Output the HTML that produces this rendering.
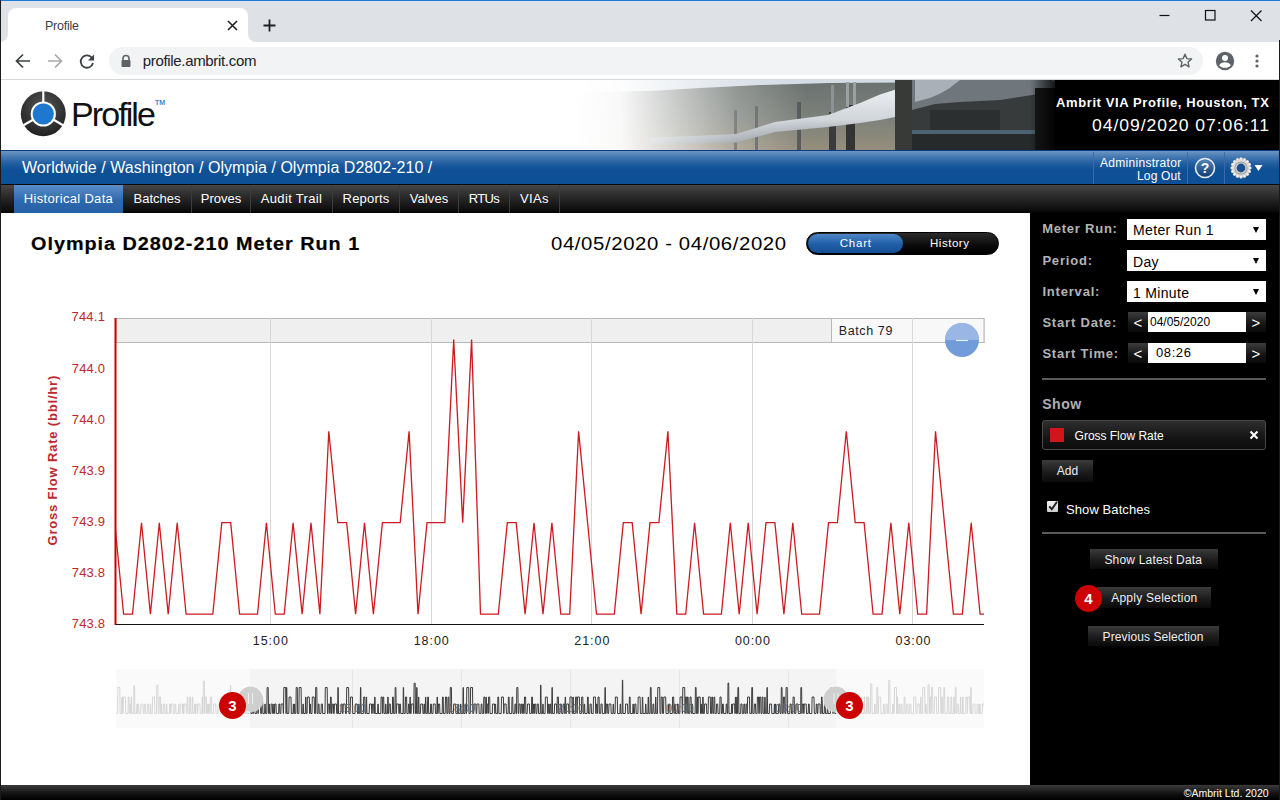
<!DOCTYPE html>
<html><head><meta charset="utf-8">
<style>
*{margin:0;padding:0;box-sizing:border-box}
html,body{width:1280px;height:800px;overflow:hidden;background:#000;font-family:"Liberation Sans",sans-serif}
.abs{position:absolute;white-space:nowrap}
#chrome{position:absolute;left:0;top:0;width:1280px;height:80px;background:#dee1e6}
#topline{left:0;top:0;width:1280px;height:1px;background:#1e78d8}
#leftline{left:0;top:0;width:1px;height:800px;background:#1a1a1a;z-index:50}
#tab{left:8px;top:8px;width:240px;height:34px;background:#fff;border-radius:8px 8px 0 0}
#toolbar{left:0;top:42px;width:1280px;height:37px;background:#fff}
#tbline{left:0;top:79px;width:1280px;height:1px;background:#d6d8db}
#omni{left:109px;top:47px;width:1094px;height:28px;background:#f1f3f4;border-radius:14px}
.ct{color:#3c4043;font-size:12.5px}
/* header */
#hdr{left:0;top:80px;width:1280px;height:70px;background:#fff;overflow:hidden}
#crumb{left:0;top:150px;width:1280px;height:35px;background:linear-gradient(#0a3a86 0,#0a3a86 1px,#6a94c0 1.5px,#4a7cb5 6px,#1f5c9f 14px,#0e5096 20px,#0e5096 34px,#0a0a0a 34px)}
#nav{left:0;top:185px;width:1280px;height:28px;background:linear-gradient(#474747,#2a2a2a 40%,#0c0c0c 92%,#000)}
.tabi{position:absolute;top:0;height:28px;color:#fff;font-size:13px;line-height:28px;text-align:center;border-right:1px solid #3c3c3c;white-space:nowrap}
#content{left:0;top:213px;width:1030px;height:572px;background:#fff}
#side{left:1030px;top:213px;width:250px;height:572px;background:#000}
#foot{left:0;top:785px;width:1280px;height:15px;background:linear-gradient(#3a3a3a,#111 60%,#000)}
.lbl{position:absolute;color:#b4b4b4;font-weight:bold;font-size:13px;line-height:1;white-space:nowrap;letter-spacing:0.81px}
.sel{position:absolute;left:1127px;width:139px;height:21px;background:#fff;color:#000;font-size:14px;line-height:21px;padding-left:6px}
.sel:after{content:"";position:absolute;right:7px;top:8px;border-left:3.5px solid transparent;border-right:3.5px solid transparent;border-top:6px solid #000}
.btn{position:absolute;height:22px;background:linear-gradient(#3b3b3b,#1c1c1c 55%,#0a0a0a);color:#eee;font-size:12px;line-height:22px;text-align:center}
.ylab{position:absolute;color:#c0282d;font-size:13px;text-align:right;width:40px;left:65px}
.xlab{position:absolute;color:#222;font-size:12.5px;line-height:1;top:635px;width:50px;text-align:center}
.badge{position:absolute;width:27px;height:27px;border-radius:50%;background:#cc0000;color:#fff;font-weight:bold;font-size:15px;line-height:27px;text-align:center}
#title{letter-spacing:0.9px!important;left:31.2px!important;top:234.6px!important;right:auto!important}
#range{letter-spacing:0.55px!important;left:550.6px!important;top:234.6px!important;right:auto!important}
#site{letter-spacing:0.61px!important;left:1056.0px!important;top:15.8px!important;right:auto!important}
#clock{letter-spacing:0.85px!important;left:1092.0px!important;top:38.2px!important;right:auto!important}
#crumbt{letter-spacing:0.04px!important;left:22.0px!important;top:9.8px!important;right:auto!important}
#l1{letter-spacing:0.76px!important;left:1042.2px!important;top:222.4px!important;right:auto!important}
#s1t{letter-spacing:0.36px!important;left:6.0px!important;top:3.8px!important;right:auto!important}
#show{letter-spacing:0.57px!important;left:1042.2px!important;top:396.6px!important;right:auto!important}
#gfr{letter-spacing:-0.02px!important;left:1074.6px!important;top:429.6px!important;right:auto!important}
#sb{letter-spacing:0.09px!important;left:1066.0px!important;top:503.0px!important;right:auto!important}
#b1t{letter-spacing:0.19px!important;left:1104.4px!important;top:553.8px!important;right:auto!important}
#b2t{letter-spacing:0.24px!important;left:1111.2px!important;top:591.8px!important;right:auto!important}
#b3t{letter-spacing:0.09px!important;left:1102.6px!important;top:630.6px!important;right:auto!important}
#lbl744{letter-spacing:0.26px!important;left:71.4px!important;top:309.8px!important;right:auto!important}
#batch{letter-spacing:0.6px!important;left:838.8px!important;top:324.8px!important;right:auto!important}
#tg1{letter-spacing:0.75px!important;left:839.8px!important;top:238.0px!important;right:auto!important}
#tg2{letter-spacing:0.52px!important;left:930.0px!important;top:238.0px!important;right:auto!important}
#admin1{letter-spacing:0.29px!important;left:1100.0px!important;top:6.8px!important;right:auto!important}
#admin2{letter-spacing:0.14px!important;left:1137.0px!important;top:20.0px!important;right:auto!important}
#x15{letter-spacing:0.93px!important;left:245.8px!important;top:635.2px!important;right:auto!important}
#logotxt{letter-spacing:-1.92px!important;left:71.0px!important;top:17.0px!important;right:auto!important}
#url{letter-spacing:-0.33px!important;left:142.8px!important;top:53.0px!important;right:auto!important}
#tabt{letter-spacing:-0.25px!important;left:45.0px!important;top:20.4px!important;right:auto!important}
#t1{letter-spacing:0.32px!important}
#t4{letter-spacing:0.32px!important}
#t5{letter-spacing:0.19px!important}
#t6{letter-spacing:0.1px!important}
#t7{letter-spacing:-0.67px!important}
#t8{letter-spacing:0.33px!important}
#copy{letter-spacing:normal!important;left:1183.8px!important;top:2.6px!important;right:auto!important}
</style></head><body>
<div id="chrome">
  <div class="abs" id="topline"></div>
  <div class="abs" id="tab"></div>
  <svg class="abs" style="left:0;top:34px" width="8" height="8" viewBox="0 0 8 8"><path d="M0 8 A8 8 0 0 0 8 0 V8Z" fill="#fff"/></svg>
  <svg class="abs" style="left:248px;top:34px" width="8" height="8" viewBox="0 0 8 8"><path d="M8 8 A8 8 0 0 1 0 0 V8Z" fill="#fff"/></svg>
  <div class="abs ct" id="tabt" style="left:45px;top:18px;line-height:1">Profile</div>
  <svg class="abs" style="left:226px;top:19px" width="13" height="13" viewBox="0 0 13 13"><path d="M2 2L11 11M11 2L2 11" stroke="#202124" stroke-width="1.6"/></svg>
  <svg class="abs" style="left:262px;top:18px" width="15" height="15" viewBox="0 0 15 15"><path d="M7.5 1.5V13.5M1.5 7.5H13.5" stroke="#202124" stroke-width="1.8"/></svg>
  <svg class="abs" style="left:1158px;top:9px" width="14" height="14" viewBox="0 0 14 14"><path d="M1.5 6.5H11.5" stroke="#111" stroke-width="1.2"/></svg>
  <svg class="abs" style="left:1203px;top:8px" width="14" height="14" viewBox="0 0 14 14"><rect x="2.5" y="2.5" width="9.5" height="9.5" fill="none" stroke="#111" stroke-width="1.2"/></svg>
  <svg class="abs" style="left:1249px;top:8px" width="14" height="14" viewBox="0 0 14 14"><path d="M2 2.5L12.5 13M12.5 2.5L2 13" stroke="#111" stroke-width="1.2"/></svg>
  <div class="abs" id="toolbar"></div>
  <div class="abs" id="tbline"></div>
  <svg class="abs" style="left:14px;top:52px" width="18" height="18" viewBox="0 0 18 18"><path d="M16 9H3M9 2.5L2.5 9L9 15.5" fill="none" stroke="#3c4043" stroke-width="1.7"/></svg>
  <svg class="abs" style="left:46px;top:52px" width="18" height="18" viewBox="0 0 18 18"><path d="M2 9H15M9 2.5L15.5 9L9 15.5" fill="none" stroke="#a6a8ab" stroke-width="1.7"/></svg>
  <svg class="abs" style="left:78px;top:52px" width="18" height="18" viewBox="0 0 18 18"><path d="M14.2 6.2A6.2 6.2 0 1 0 15 11" fill="none" stroke="#3c4043" stroke-width="1.8"/><path d="M16 2.5V8.5H10Z" fill="#3c4043"/></svg>
  <div class="abs" id="omni"></div>
  <svg class="abs" style="left:120px;top:54px" width="12" height="14" viewBox="0 0 12 14"><path d="M3 6V4.5A3 3 0 0 1 9 4.5V6" fill="none" stroke="#5f6368" stroke-width="1.6"/><rect x="1.5" y="6" width="9" height="7" rx="1" fill="#5f6368"/></svg>
  <div class="abs" id="url" style="left:143px;top:52px;font-size:15px;line-height:1;color:#202124">profile.ambrit.com</div>
  <svg class="abs" style="left:1176px;top:52px" width="18" height="18" viewBox="0 0 18 18"><path d="M9 2.2L10.9 6.6L15.6 7L12 10.1L13.1 14.8L9 12.3L4.9 14.8L6 10.1L2.4 7L7.1 6.6Z" fill="none" stroke="#5f6368" stroke-width="1.4" stroke-linejoin="round"/></svg>
  <svg class="abs" style="left:1215px;top:51px" width="20" height="20" viewBox="0 0 20 20"><circle cx="10" cy="10" r="9.2" fill="#5f6368"/><circle cx="10" cy="7" r="3" fill="#fff"/><path d="M4.2 14.2C5.5 12 7.5 11.3 10 11.3S14.5 12 15.8 14.2C14.3 16 12.3 16.8 10 16.8S5.7 16 4.2 14.2Z" fill="#fff"/></svg>
  <svg class="abs" style="left:1253px;top:52px" width="8" height="18" viewBox="0 0 8 18"><circle cx="4" cy="4" r="1.6" fill="#5f6368"/><circle cx="4" cy="9" r="1.6" fill="#5f6368"/><circle cx="4" cy="14" r="1.6" fill="#5f6368"/></svg>
</div>
<div class="abs" id="leftline"></div>
<div class="abs" style="left:1279px;top:40px;width:1px;height:760px;background:#1a1a1a;z-index:50"></div>

<div class="abs" id="hdr">
<svg class="abs" style="left:0;top:0" width="1280" height="70" viewBox="0 0 1280 70">
  <defs>
    <linearGradient id="sky" x1="0" y1="0" x2="0" y2="1">
      <stop offset="0" stop-color="#c9d3dc"/><stop offset="1" stop-color="#e8e6e0"/>
    </linearGradient>
    <linearGradient id="fadeL" x1="0" y1="0" x2="1" y2="0">
      <stop offset="0" stop-color="#fff" stop-opacity="1"/>
      <stop offset="0.2" stop-color="#fff" stop-opacity="0.95"/>
      <stop offset="0.45" stop-color="#fff" stop-opacity="0.6"/>
      <stop offset="0.7" stop-color="#fff" stop-opacity="0.25"/>
      <stop offset="1" stop-color="#fff" stop-opacity="0"/>
    </linearGradient>
    <linearGradient id="pipe" x1="0" y1="0" x2="0" y2="1">
      <stop offset="0" stop-color="#f2f4f6"/><stop offset="0.6" stop-color="#d0d5da"/><stop offset="1" stop-color="#8a9199"/>
    </linearGradient>
    <linearGradient id="hill" x1="0" y1="0" x2="0" y2="1">
      <stop offset="0" stop-color="#6a716f"/><stop offset="0.55" stop-color="#7d817b"/><stop offset="1" stop-color="#958e7c"/>
    </linearGradient>
    <linearGradient id="darkR" x1="0" y1="0" x2="1" y2="0">
      <stop offset="0" stop-color="#000" stop-opacity="0"/>
      <stop offset="1" stop-color="#000" stop-opacity="1"/>
    </linearGradient>
    <radialGradient id="ring" cx="0.5" cy="0.35" r="0.7">
      <stop offset="0" stop-color="#555"/><stop offset="1" stop-color="#1e1e1e"/>
    </radialGradient>
  </defs>
  <!-- photo -->
  <rect x="575" y="0" width="705" height="70" fill="#d3dbe3"/>
  <path d="M575 12 L650 11 L700 8 L760 5 L830 3 L1280 0 L1280 70 L575 70Z" fill="url(#hill)"/>
  <g fill="#55585a">
    <rect x="734" y="30" width="3" height="40"/><rect x="755" y="26" width="3" height="44"/>
    <rect x="797" y="22" width="4" height="48"/>
    <rect x="829" y="32" width="7" height="38" fill="#3a3c3c"/><rect x="831" y="5" width="3" height="30" fill="#8d9296"/>
    <rect x="846" y="25" width="9" height="45" fill="#333535"/><rect x="846" y="2" width="3" height="25" fill="#9aa0a4"/><rect x="853" y="2" width="3" height="25" fill="#9aa0a4"/>
  </g>
  <path d="M650 58 L736 54 L775 42 L828 35 L860 23 L880 14.6 L895 9.7 L912 4 L912 37 L895 37 L880 40 L860 43 L828 47 L775 52 L736 62.5 L650 64Z" fill="url(#pipe)"/>
  <rect x="912" y="0" width="140" height="70" fill="#383b3b"/>
  <path d="M912 0 L1052 0 L1052 12 L1000 20 L960 22 L935 24 L912 30Z" fill="#6f767c"/>
  <path d="M915 0 L960 0 C950 8 945 12 930 18 L915 22Z" fill="#a9b0b7"/>
  <rect x="930" y="30" width="70" height="22" fill="#2c2f30"/>
  <rect x="912" y="50" width="125" height="4" fill="#4d6272"/>
  <rect x="912" y="54" width="125" height="16" fill="#262a2b"/>
  <rect x="895" y="0" width="17" height="70" fill="#383a38"/>
  <rect x="1035" y="8" width="20" height="62" fill="#181818"/>
  <rect x="575" y="0" width="230" height="70" fill="url(#fadeL)"/>
  <rect x="1030" y="0" width="30" height="70" fill="url(#darkR)"/>
  <rect x="1055" y="0" width="225" height="70" fill="#000"/>
  <!-- logo -->
  <circle cx="43.3" cy="33.8" r="22.5" fill="url(#ring)"/>
  <g stroke="#fff" stroke-width="2.2">
    <line x1="43.3" y1="33.8" x2="43.3" y2="10"/>
    <line x1="43.3" y1="33.8" x2="22.7" y2="45.7"/>
    <line x1="43.3" y1="33.8" x2="63.9" y2="45.7"/>
  </g>
  <circle cx="43.3" cy="34" r="12.6" fill="#fff"/>
  <circle cx="43.3" cy="34" r="10.6" fill="#1f78cf"/>
</svg>
<div class="abs" id="logotxt" style="left:72px;top:14px;font-size:34px;line-height:1;color:#111;transform-origin:0 0">Profile</div>
<div class="abs" id="tm" style="left:155px;top:19px;font-size:7px;font-weight:bold;color:#3a88d0">TM</div>
<div class="abs" id="site" style="left:1056px;top:15px;font-size:13px;line-height:1;font-weight:bold;color:#fff">Ambrit VIA Profile, Houston, TX</div>
<div class="abs" id="clock" style="left:1092px;top:37px;font-size:16px;line-height:1;transform:scaleX(1.1);transform-origin:0 0;color:#fff">04/09/2020 07:06:11</div>

</div>
<div class="abs" id="crumb">
  <div class="abs" id="crumbt" style="left:21px;top:8px;color:#fff;font-size:16px;line-height:1;white-space:nowrap">Worldwide / Washington / Olympia / Olympia D2802-210 /</div>
  <div class="abs" style="left:1093px;top:2px;width:1px;height:32px;background:#3c6aa8"></div>
<div class="abs" id="admin1" style="left:1100px;top:6px;font-size:12px;color:#fff;line-height:1">Admininstrator</div><div class="abs" id="admin2" style="left:1138px;top:19px;font-size:12px;color:#fff;line-height:1">Log Out</div>
<div class="abs" style="left:1187px;top:2px;width:1px;height:32px;background:#3c6aa8"></div>
<svg class="abs" style="left:1194px;top:7px" width="22" height="22" viewBox="0 0 22 22"><defs><linearGradient id="hg" x1="0" y1="0" x2="0" y2="1"><stop offset="0" stop-color="#5a86b8"/><stop offset="1" stop-color="#0d3c74"/></linearGradient></defs><circle cx="11" cy="11" r="9.5" fill="url(#hg)" stroke="#e8eef5" stroke-width="1.6"/><text x="11" y="16" text-anchor="middle" font-family="Liberation Sans" font-weight="bold" font-size="14" fill="#fff">?</text></svg>
<div class="abs" style="left:1224px;top:2px;width:1px;height:32px;background:#3c6aa8"></div>
<svg class="abs" style="left:1229px;top:6px" width="24" height="24" viewBox="0 0 24 24"><defs><radialGradient id="gg" cx="0.5" cy="0.4" r="0.6"><stop offset="0" stop-color="#ffffff"/><stop offset="1" stop-color="#c9c9c9"/></radialGradient></defs><g fill="url(#gg)"><circle cx="12" cy="12" r="9.2"/><circle cx="21.00" cy="12.00" r="1.7"/><circle cx="20.31" cy="15.44" r="1.7"/><circle cx="18.36" cy="18.36" r="1.7"/><circle cx="15.44" cy="20.31" r="1.7"/><circle cx="12.00" cy="21.00" r="1.7"/><circle cx="8.56" cy="20.31" r="1.7"/><circle cx="5.64" cy="18.36" r="1.7"/><circle cx="3.69" cy="15.44" r="1.7"/><circle cx="3.00" cy="12.00" r="1.7"/><circle cx="3.69" cy="8.56" r="1.7"/><circle cx="5.64" cy="5.64" r="1.7"/><circle cx="8.56" cy="3.69" r="1.7"/><circle cx="12.00" cy="3.00" r="1.7"/><circle cx="15.44" cy="3.69" r="1.7"/><circle cx="18.36" cy="5.64" r="1.7"/><circle cx="20.31" cy="8.56" r="1.7"/></g><circle cx="12" cy="12" r="6.6" fill="#9a9a9a"/><circle cx="12" cy="12" r="5.6" fill="#d8d8d8"/><circle cx="12" cy="12" r="4.4" fill="#1b4f8e"/></svg>
<svg class="abs" style="left:1254px;top:14px" width="9" height="8" viewBox="0 0 9 8"><path d="M0.5 1H8.5L4.5 7Z" fill="#fff"/></svg>

</div>
<div class="abs" id="nav">
<div class="abs" style="left:14px;top:0;width:109px;height:28px;background:linear-gradient(#5b8fcc,#2f69ad 55%,#2460a6)"></div>
<div class="tabi" id="t1" style="left:14px;width:109px;border-right:none">Historical Data</div>
<div class="tabi" id="t2" style="left:123px;width:69px">Batches</div>
<div class="tabi" id="t3" style="left:192px;width:59px">Proves</div>
<div class="tabi" id="t4" style="left:251px;width:82px">Audit Trail</div>
<div class="tabi" id="t5" style="left:333px;width:67px">Reports</div>
<div class="tabi" id="t6" style="left:400px;width:59px">Valves</div>
<div class="tabi" id="t7" style="left:459px;width:51px">RTUs</div>
<div class="tabi" id="t8" style="left:510px;width:50px">VIAs</div>

</div>
<div class="abs" id="content"></div>
<div class="abs" id="title" style="left:31px;top:233px;font-size:18px;line-height:1;transform:scaleX(1.1);transform-origin:0 0;-webkit-text-stroke:0.2px #000;font-weight:bold;color:#000">Olympia D2802-210 Meter Run 1</div>
<div class="abs" id="range" style="left:550px;top:232px;font-size:18.5px;line-height:1;transform:scaleX(1.1);transform-origin:0 0;color:#000">04/05/2020 - 04/06/2020</div>
<div class="abs" style="left:806px;top:232px;width:193px;height:23px;border-radius:12px;background:linear-gradient(#2b2b2b,#0a0a0a 60%,#000);border:1px solid #000"></div>
<div class="abs" style="left:808px;top:234px;width:95px;height:19px;border-radius:10px;background:linear-gradient(#4f86c6,#1f5ea6 55%,#154f94)"></div>
<div class="abs" id="tg1" style="left:840px;top:237px;font-size:11.5px;line-height:1;color:#fff">Chart</div>
<div class="abs" id="tg2" style="left:930px;top:237px;font-size:11.5px;line-height:1;color:#fff">History</div>
<svg class="abs" style="left:0;top:0" width="1030" height="785" viewBox="0 0 1030 785">
  <!-- batch band -->
  <rect x="116" y="318.5" width="868" height="24" fill="#efefef" stroke="#b9b9b9" stroke-width="1"/>
  <rect x="831.5" y="318.5" width="152.5" height="24" fill="#f8f8f8" stroke="#b9b9b9" stroke-width="1"/>
  <!-- grid -->
  <g stroke="#d8d8d8" stroke-width="1">
    <line x1="270.5" y1="318" x2="270.5" y2="624"/>
    <line x1="431.5" y1="318" x2="431.5" y2="624"/>
    <line x1="591.5" y1="318" x2="591.5" y2="624"/>
    <line x1="752.5" y1="318" x2="752.5" y2="624"/>
    <line x1="912.5" y1="318" x2="912.5" y2="624"/>
  </g>
  <defs><clipPath id="pc"><rect x="116" y="300" width="868" height="324"/></clipPath></defs>
  <polyline clip-path="url(#pc)" points="114.7,522.7 123.6,614.2 132.5,614.2 141.5,522.7 150.4,614.2 159.3,522.7 168.2,614.2 177.2,522.7 186.1,614.2 195.0,614.2 203.9,614.2 212.8,614.2 221.8,522.7 230.7,522.7 239.6,614.2 248.5,614.2 257.5,614.2 266.4,522.7 275.3,614.2 284.2,614.2 293.1,522.7 302.1,614.2 311.0,522.7 319.9,614.2 328.8,431.2 337.8,522.7 346.7,522.7 355.6,614.2 364.5,522.7 373.4,614.2 382.4,522.7 391.3,522.7 400.2,522.7 409.1,431.2 418.0,614.2 427.0,522.7 435.9,522.7 444.8,522.7 453.7,339.6 462.7,522.7 471.6,339.6 480.5,614.2 489.4,614.2 498.3,614.2 507.3,522.7 516.2,522.7 525.1,614.2 534.0,522.7 543.0,614.2 551.9,522.7 560.8,614.2 569.7,614.2 578.6,431.2 587.6,522.7 596.5,614.2 605.4,614.2 614.3,614.2 623.3,522.7 632.2,522.7 641.1,614.2 650.0,522.7 658.9,522.7 667.9,431.2 676.8,614.2 685.7,614.2 694.6,522.7 703.6,614.2 712.5,614.2 721.4,614.2 730.3,522.7 739.2,614.2 748.2,522.7 757.1,614.2 766.0,522.7 774.9,522.7 783.9,614.2 792.8,522.7 801.7,614.2 810.6,614.2 819.5,614.2 828.5,522.7 837.4,522.7 846.3,431.2 855.2,522.7 864.1,522.7 873.1,614.2 882.0,614.2 890.9,522.7 899.8,614.2 908.8,522.7 917.7,614.2 926.6,614.2 935.5,431.2 944.4,522.7 953.4,614.2 962.3,614.2 971.2,522.7 980.1,614.2 989.1,614.2" fill="none" stroke="#cc1a20" stroke-width="1.3" stroke-linejoin="miter"/>
  <line x1="115.5" y1="318" x2="115.5" y2="625" stroke="#cc0000" stroke-width="2"/>
  <line x1="116" y1="624.5" x2="984" y2="624.5" stroke="#111" stroke-width="1.2"/>
  <circle cx="962" cy="340" r="17" fill="#6a96d8" opacity="0.95"/>
  <path d="M945 340 A17 17 0 0 1 979 340Z" fill="#9db9e4" opacity="0.9"/>
  <line x1="956" y1="340.5" x2="968" y2="340.5" stroke="#e8eef8" stroke-width="1.2"/>
  <!-- navigator -->
  <rect x="116" y="669" width="868" height="59" fill="#fafafa"/>
  <rect x="250" y="669" width="586" height="59" fill="#f4f4f4"/>
  <g stroke="#e6e6e6" stroke-width="1"><line x1="352.5" y1="670" x2="352.5" y2="728"/><line x1="461.5" y1="670" x2="461.5" y2="728"/><line x1="570.5" y1="670" x2="570.5" y2="728"/><line x1="679.5" y1="670" x2="679.5" y2="728"/><line x1="788.5" y1="670" x2="788.5" y2="728"/></g>
  <defs><clipPath id="nsel"><rect x="250" y="660" width="586" height="70"/></clipPath>
  <clipPath id="nout"><path d="M116 660H250V730H116Z M836 660H984V730H836Z"/></clipPath></defs>
  <polyline clip-path="url(#nout)" points="116.0,713.5 117.6,713.5 117.9,687.5 119.8,687.5 120.1,713.5 121.4,713.5 121.7,697.0 122.4,697.0 122.7,713.5 123.2,713.5 123.5,697.0 125.4,697.0 125.7,713.5 128.0,713.5 128.3,697.0 129.0,697.0 129.3,713.5 129.5,713.5 129.8,704.0 130.5,704.0 130.8,713.5 131.0,713.5 131.3,697.0 131.6,697.0 131.9,713.5 133.6,713.5 133.9,685.8 134.6,685.8 134.9,713.5 136.6,713.5 136.9,704.0 137.2,704.0 137.5,713.5 137.7,713.5 138.0,704.0 138.7,704.0 139.0,713.5 140.7,713.5 141.0,704.0 142.9,704.0 143.2,713.5 144.1,713.5 144.4,704.0 145.1,704.0 145.4,713.5 147.1,713.5 147.4,704.0 148.5,704.0 148.8,713.5 150.1,713.5 150.4,704.0 150.7,704.0 151.0,713.5 152.3,713.5 152.6,697.0 154.5,697.0 154.8,713.5 156.5,713.5 156.8,685.0 157.9,685.0 158.2,713.5 159.1,713.5 159.4,697.0 160.5,697.0 160.8,713.5 161.0,713.5 161.3,704.0 161.6,704.0 161.9,713.5 163.2,713.5 163.5,704.0 164.6,704.0 164.9,713.5 166.2,713.5 166.5,704.0 166.8,704.0 167.1,713.5 169.4,713.5 169.7,704.0 170.4,704.0 170.7,713.5 170.9,713.5 171.2,704.0 173.1,704.0 173.4,713.5 174.7,713.5 175.0,704.0 175.7,704.0 176.0,713.5 178.3,713.5 178.6,704.0 178.9,704.0 179.2,713.5 180.1,713.5 180.4,704.0 182.3,704.0 182.6,713.5 182.8,713.5 183.1,704.0 183.4,704.0 183.7,713.5 183.9,713.5 184.2,704.0 186.1,704.0 186.4,713.5 186.9,713.5 187.2,697.0 187.9,697.0 188.2,713.5 189.5,713.5 189.8,697.0 190.5,697.0 190.8,713.5 192.1,713.5 192.4,697.0 192.7,697.0 193.0,713.5 194.3,713.5 194.6,704.0 195.3,704.0 195.6,713.5 195.8,713.5 196.1,704.0 197.2,704.0 197.5,713.5 197.7,713.5 198.0,704.0 199.9,704.0 200.2,713.5 201.9,713.5 202.2,697.0 202.5,697.0 202.8,713.5 203.0,713.5 203.3,681.3 204.4,681.3 204.7,713.5 204.9,713.5 205.2,697.0 206.3,697.0 206.6,713.5 207.5,713.5 207.8,704.0 208.1,704.0 208.4,713.5 208.6,713.5 208.9,704.0 209.6,704.0 209.9,713.5 210.1,713.5 210.4,697.0 211.5,697.0 211.8,713.5 213.5,713.5 213.8,704.0 215.7,704.0 216.0,713.5 217.7,713.5 218.0,704.0 219.9,704.0 220.2,713.5 220.7,713.5 221.0,697.0 222.1,697.0 222.4,713.5 222.9,713.5 223.2,697.0 223.9,697.0 224.2,713.5 226.5,713.5 226.8,704.0 227.5,704.0 227.8,713.5 230.1,713.5 230.4,685.3 230.7,685.3 231.0,713.5 232.3,713.5 232.6,704.0 232.9,704.0 233.2,713.5 233.4,713.5 233.7,697.0 234.8,697.0 235.1,713.5 235.6,713.5 235.9,697.0 237.8,697.0 238.1,713.5 239.0,713.5 239.3,704.0 241.2,704.0 241.5,713.5 242.4,713.5 242.7,697.0 243.0,697.0 243.3,713.5 243.8,713.5 244.1,704.0 244.4,704.0 244.7,713.5 245.6,713.5 245.9,704.0 246.6,704.0 246.9,713.5 249.2,713.5 249.5,704.0 250.6,704.0 250.9,713.5 252.2,713.5 252.5,704.0 252.8,704.0 253.1,713.5 253.3,713.5 253.6,704.0 254.7,704.0 255.0,713.5 256.7,713.5 257.0,697.0 257.7,697.0 258.0,713.5 258.2,713.5 258.5,704.0 260.4,704.0 260.7,713.5 261.6,713.5 261.9,697.0 262.6,697.0 262.9,713.5 264.6,713.5 264.9,704.0 265.2,704.0 265.5,713.5 266.8,713.5 267.1,687.5 268.2,687.5 268.5,713.5 268.7,713.5 269.0,704.0 269.3,704.0 269.6,713.5 270.9,713.5 271.2,704.0 272.3,704.0 272.6,713.5 273.5,713.5 273.8,704.0 274.1,704.0 274.4,713.5 274.6,713.5 274.9,704.0 276.0,704.0 276.3,713.5 278.6,713.5 278.9,704.0 279.6,704.0 279.9,713.5 280.8,713.5 281.1,704.0 283.0,704.0 283.3,713.5 283.5,713.5 283.8,687.5 285.7,687.5 286.0,713.5 286.2,713.5 286.5,687.5 286.8,687.5 287.1,713.5 288.8,713.5 289.1,697.0 291.0,697.0 291.3,713.5 293.0,713.5 293.3,704.0 293.6,704.0 293.9,713.5 294.1,713.5 294.4,704.0 294.7,704.0 295.0,713.5 295.9,713.5 296.2,687.5 297.3,687.5 297.6,713.5 298.9,713.5 299.2,687.5 301.1,687.5 301.4,713.5 302.7,713.5 303.0,704.0 303.3,704.0 303.6,713.5 305.3,713.5 305.6,697.0 305.9,697.0 306.2,713.5 307.1,713.5 307.4,697.0 309.3,697.0 309.6,713.5 309.8,713.5 310.1,704.0 310.4,704.0 310.7,713.5 312.0,713.5 312.3,697.0 314.2,697.0 314.5,713.5 315.4,713.5 315.7,687.5 316.8,687.5 317.1,713.5 318.0,713.5 318.3,704.0 319.0,704.0 319.3,713.5 321.0,713.5 321.3,704.0 322.4,704.0 322.7,713.5 325.0,713.5 325.3,687.5 327.2,687.5 327.5,713.5 328.0,713.5 328.3,704.0 329.4,704.0 329.7,713.5 330.2,713.5 330.5,697.0 331.2,697.0 331.5,713.5 332.0,713.5 332.3,704.0 333.4,704.0 333.7,713.5 334.2,713.5 334.5,704.0 336.4,704.0 336.7,713.5 337.6,713.5 337.9,687.5 338.2,687.5 338.5,713.5 340.8,713.5 341.1,704.0 342.2,704.0 342.5,713.5 343.0,713.5 343.3,704.0 345.2,704.0 345.5,713.5 346.4,713.5 346.7,687.5 348.6,687.5 348.9,713.5 350.2,713.5 350.5,697.0 352.4,697.0 352.7,713.5 355.0,713.5 355.3,704.0 357.2,704.0 357.5,713.5 358.4,713.5 358.7,704.0 359.0,704.0 359.3,713.5 360.2,713.5 360.5,687.5 360.8,687.5 361.1,713.5 363.4,713.5 363.7,697.0 364.8,697.0 365.1,713.5 366.0,713.5 366.3,697.0 366.6,697.0 366.9,713.5 369.2,713.5 369.5,704.0 371.4,704.0 371.7,713.5 372.2,713.5 372.5,704.0 373.6,704.0 373.9,713.5 374.4,713.5 374.7,697.0 375.0,697.0 375.3,713.5 377.6,713.5 377.9,704.0 378.2,704.0 378.5,713.5 380.8,713.5 381.1,697.0 382.2,697.0 382.5,713.5 382.7,713.5 383.0,697.0 383.7,697.0 384.0,713.5 385.3,713.5 385.6,704.0 385.9,704.0 386.2,713.5 387.5,713.5 387.8,697.0 388.1,697.0 388.4,713.5 388.9,713.5 389.2,704.0 390.3,704.0 390.6,713.5 392.3,713.5 392.6,697.0 393.3,697.0 393.6,713.5 394.9,713.5 395.2,687.5 395.9,687.5 396.2,713.5 396.4,713.5 396.7,704.0 398.6,704.0 398.9,713.5 399.4,713.5 399.7,704.0 400.4,704.0 400.7,713.5 403.0,713.5 403.3,687.5 403.6,687.5 403.9,713.5 405.2,713.5 405.5,697.0 406.6,697.0 406.9,713.5 408.2,713.5 408.5,704.0 409.2,704.0 409.5,713.5 409.7,713.5 410.0,697.0 410.3,697.0 410.6,713.5 411.1,713.5 411.4,704.0 413.3,704.0 413.6,713.5 413.8,713.5 414.1,683.2 415.2,683.2 415.5,713.5 416.4,713.5 416.7,687.5 417.0,687.5 417.3,713.5 418.2,713.5 418.5,697.0 418.8,697.0 419.1,713.5 420.4,713.5 420.7,704.0 422.6,704.0 422.9,713.5 423.8,713.5 424.1,704.0 424.4,704.0 424.7,713.5 425.2,713.5 425.5,697.0 425.8,697.0 426.1,713.5 427.4,713.5 427.7,697.0 428.4,697.0 428.7,713.5 430.4,713.5 430.7,704.0 431.4,704.0 431.7,713.5 433.0,713.5 433.3,704.0 435.2,704.0 435.5,713.5 436.8,713.5 437.1,697.0 437.4,697.0 437.7,713.5 438.2,713.5 438.5,704.0 439.6,704.0 439.9,713.5 442.2,713.5 442.5,697.0 443.2,697.0 443.5,713.5 445.2,713.5 445.5,697.0 446.6,697.0 446.9,713.5 447.8,713.5 448.1,697.0 448.8,697.0 449.1,713.5 450.0,713.5 450.3,687.5 451.4,687.5 451.7,713.5 453.4,713.5 453.7,704.0 455.6,704.0 455.9,713.5 457.6,713.5 457.9,704.0 458.2,704.0 458.5,713.5 460.2,713.5 460.5,704.0 460.8,704.0 461.1,713.5 462.8,713.5 463.1,687.5 463.4,687.5 463.7,713.5 465.0,713.5 465.3,704.0 466.0,704.0 466.3,713.5 466.5,713.5 466.8,687.5 468.7,687.5 469.0,713.5 470.3,713.5 470.6,687.5 472.5,687.5 472.8,713.5 473.7,713.5 474.0,704.0 475.9,704.0 476.2,713.5 476.7,713.5 477.0,704.0 478.9,704.0 479.2,713.5 480.9,713.5 481.2,704.0 481.9,704.0 482.2,713.5 483.5,713.5 483.8,697.0 484.9,697.0 485.2,713.5 485.7,713.5 486.0,697.0 486.3,697.0 486.6,713.5 486.8,713.5 487.1,704.0 487.8,704.0 488.1,713.5 488.3,713.5 488.6,697.0 489.7,697.0 490.0,713.5 492.3,713.5 492.6,704.0 494.5,704.0 494.8,713.5 495.0,713.5 495.3,704.0 495.6,704.0 495.9,713.5 497.6,713.5 497.9,697.0 498.6,697.0 498.9,713.5 501.2,713.5 501.5,697.0 503.4,697.0 503.7,713.5 503.9,713.5 504.2,704.0 506.1,704.0 506.4,713.5 508.1,713.5 508.4,697.0 509.1,697.0 509.4,713.5 511.7,713.5 512.0,697.0 512.7,697.0 513.0,713.5 514.7,713.5 515.0,704.0 515.7,704.0 516.0,713.5 516.5,713.5 516.8,687.5 517.9,687.5 518.2,713.5 518.7,713.5 519.0,704.0 520.1,704.0 520.4,713.5 520.9,713.5 521.2,704.0 521.9,704.0 522.2,713.5 522.4,713.5 522.7,704.0 523.4,704.0 523.7,713.5 524.2,713.5 524.5,697.0 525.6,697.0 525.9,713.5 527.2,713.5 527.5,704.0 529.4,704.0 529.7,713.5 531.4,713.5 531.7,697.0 532.4,697.0 532.7,713.5 533.2,713.5 533.5,704.0 533.8,704.0 534.1,713.5 534.3,713.5 534.6,704.0 535.7,704.0 536.0,713.5 536.9,713.5 537.2,704.0 538.3,704.0 538.6,713.5 540.3,713.5 540.6,685.0 540.9,685.0 541.2,713.5 542.5,713.5 542.8,704.0 543.1,704.0 543.4,713.5 545.1,713.5 545.4,697.0 547.3,697.0 547.6,713.5 548.1,713.5 548.4,704.0 548.7,704.0 549.0,713.5 549.5,713.5 549.8,704.0 550.5,704.0 550.8,713.5 551.7,713.5 552.0,687.5 552.3,687.5 552.6,713.5 554.3,713.5 554.6,704.0 556.5,704.0 556.8,713.5 557.0,713.5 557.3,697.0 558.4,697.0 558.7,713.5 560.0,713.5 560.3,704.0 561.4,704.0 561.7,713.5 563.0,713.5 563.3,704.0 564.4,704.0 564.7,713.5 564.9,713.5 565.2,697.0 565.5,697.0 565.8,713.5 566.3,713.5 566.6,704.0 568.5,704.0 568.8,713.5 569.7,713.5 570.0,697.0 571.9,697.0 572.2,713.5 572.7,713.5 573.0,697.0 573.3,697.0 573.6,713.5 575.3,713.5 575.6,697.0 576.7,697.0 577.0,713.5 577.2,713.5 577.5,697.0 579.4,697.0 579.7,713.5 581.4,713.5 581.7,697.0 582.8,697.0 583.1,713.5 584.0,713.5 584.3,704.0 584.6,704.0 584.9,713.5 587.2,713.5 587.5,697.0 588.2,697.0 588.5,713.5 589.8,713.5 590.1,704.0 591.2,704.0 591.5,713.5 593.2,713.5 593.5,697.0 595.4,697.0 595.7,713.5 596.2,713.5 596.5,704.0 597.2,704.0 597.5,713.5 597.7,713.5 598.0,697.0 599.1,697.0 599.4,713.5 600.7,713.5 601.0,704.0 602.1,704.0 602.4,713.5 604.7,713.5 605.0,687.5 605.3,687.5 605.6,713.5 606.1,713.5 606.4,704.0 607.5,704.0 607.8,713.5 608.7,713.5 609.0,704.0 610.9,704.0 611.2,713.5 612.9,713.5 613.2,704.0 613.5,704.0 613.8,713.5 615.1,713.5 615.4,697.0 617.3,697.0 617.6,713.5 619.9,713.5 620.2,704.0 620.5,704.0 620.8,713.5 622.1,713.5 622.4,680.1 622.7,680.1 623.0,713.5 625.3,713.5 625.6,704.0 627.5,704.0 627.8,713.5 629.1,713.5 629.4,697.0 630.1,697.0 630.4,713.5 632.7,713.5 633.0,704.0 633.3,704.0 633.6,713.5 634.5,713.5 634.8,704.0 635.9,704.0 636.2,713.5 637.9,713.5 638.2,697.0 640.1,697.0 640.4,713.5 642.1,713.5 642.4,697.0 642.7,697.0 643.0,713.5 645.3,713.5 645.6,704.0 645.9,704.0 646.2,713.5 647.9,713.5 648.2,697.0 648.5,697.0 648.8,713.5 650.1,713.5 650.4,687.5 651.1,687.5 651.4,713.5 652.7,713.5 653.0,704.0 653.7,704.0 654.0,713.5 655.3,713.5 655.6,697.0 655.9,697.0 656.2,713.5 657.5,713.5 657.8,687.5 659.7,687.5 660.0,713.5 660.9,713.5 661.2,697.0 662.3,697.0 662.6,713.5 663.5,713.5 663.8,697.0 665.7,697.0 666.0,713.5 668.3,713.5 668.6,704.0 669.7,704.0 670.0,713.5 672.3,713.5 672.6,697.0 673.7,697.0 674.0,713.5 674.2,713.5 674.5,704.0 675.2,704.0 675.5,713.5 677.2,713.5 677.5,704.0 678.2,704.0 678.5,713.5 679.8,713.5 680.1,697.0 682.0,697.0 682.3,713.5 682.5,713.5 682.8,687.5 684.7,687.5 685.0,713.5 685.2,713.5 685.5,697.0 686.6,697.0 686.9,713.5 687.1,713.5 687.4,697.0 688.1,697.0 688.4,713.5 689.7,713.5 690.0,697.0 691.1,697.0 691.4,713.5 691.9,713.5 692.2,704.0 692.5,704.0 692.8,713.5 695.1,713.5 695.4,687.5 696.1,687.5 696.4,713.5 696.9,713.5 697.2,697.0 697.5,697.0 697.8,713.5 698.0,713.5 698.3,697.0 700.2,697.0 700.5,713.5 700.7,713.5 701.0,704.0 701.3,704.0 701.6,713.5 702.5,713.5 702.8,697.0 703.1,697.0 703.4,713.5 704.3,713.5 704.6,704.0 706.5,704.0 706.8,713.5 708.1,713.5 708.4,697.0 710.3,697.0 710.6,713.5 711.5,713.5 711.8,697.0 712.5,697.0 712.8,713.5 713.7,713.5 714.0,697.0 714.7,697.0 715.0,713.5 716.3,713.5 716.6,704.0 717.7,704.0 718.0,713.5 719.7,713.5 720.0,697.0 721.1,697.0 721.4,713.5 722.3,713.5 722.6,704.0 723.3,704.0 723.6,713.5 725.9,713.5 726.2,704.0 726.9,704.0 727.2,713.5 727.7,713.5 728.0,683.0 728.7,683.0 729.0,713.5 731.3,713.5 731.6,704.0 731.9,704.0 732.2,713.5 732.4,713.5 732.7,704.0 734.6,704.0 734.9,713.5 735.1,713.5 735.4,697.0 735.7,697.0 736.0,713.5 736.5,713.5 736.8,697.0 737.1,697.0 737.4,713.5 737.6,713.5 737.9,687.5 738.6,687.5 738.9,713.5 740.6,713.5 740.9,704.0 742.0,704.0 742.3,713.5 743.6,713.5 743.9,704.0 744.6,704.0 744.9,713.5 745.8,713.5 746.1,704.0 746.8,704.0 747.1,713.5 747.3,713.5 747.6,697.0 749.5,697.0 749.8,713.5 751.5,713.5 751.8,687.5 752.5,687.5 752.8,713.5 754.1,713.5 754.4,704.0 755.5,704.0 755.8,713.5 757.1,713.5 757.4,697.0 758.5,697.0 758.8,713.5 759.3,713.5 759.6,697.0 760.7,697.0 761.0,713.5 761.9,713.5 762.2,697.0 762.9,697.0 763.2,713.5 764.5,713.5 764.8,697.0 765.1,697.0 765.4,713.5 766.7,713.5 767.0,687.5 767.3,687.5 767.6,713.5 769.3,713.5 769.6,704.0 771.5,704.0 771.8,713.5 774.1,713.5 774.4,704.0 774.7,704.0 775.0,713.5 775.2,713.5 775.5,704.0 775.8,704.0 776.1,713.5 778.4,713.5 778.7,704.0 779.8,704.0 780.1,713.5 781.0,713.5 781.3,687.5 782.0,687.5 782.3,713.5 783.2,713.5 783.5,697.0 784.6,697.0 784.9,713.5 785.8,713.5 786.1,687.5 787.2,687.5 787.5,713.5 789.8,713.5 790.1,704.0 791.2,704.0 791.5,713.5 792.8,713.5 793.1,697.0 794.2,697.0 794.5,713.5 795.8,713.5 796.1,704.0 798.0,704.0 798.3,713.5 800.6,713.5 800.9,687.5 801.6,687.5 801.9,713.5 802.1,713.5 802.4,704.0 803.5,704.0 803.8,713.5 804.0,713.5 804.3,704.0 806.2,704.0 806.5,713.5 808.2,713.5 808.5,704.0 809.2,704.0 809.5,713.5 811.8,713.5 812.1,697.0 814.0,697.0 814.3,713.5 816.0,713.5 816.3,704.0 817.0,704.0 817.3,713.5 817.8,713.5 818.1,704.0 820.0,704.0 820.3,713.5 821.2,713.5 821.5,697.0 822.2,697.0 822.5,713.5 824.2,713.5 824.5,704.0 825.2,704.0 825.5,713.5 827.2,713.5 827.5,704.0 827.8,704.0 828.1,713.5 830.4,713.5 830.7,687.5 832.6,687.5 832.9,713.5 833.1,713.5 833.4,697.0 834.5,697.0 834.8,713.5 836.5,713.5 836.8,704.0 837.1,704.0 837.4,713.5 838.3,713.5 838.6,697.0 839.7,697.0 840.0,713.5 840.2,713.5 840.5,704.0 841.2,704.0 841.5,713.5 841.7,713.5 842.0,697.0 843.9,697.0 844.2,713.5 844.7,713.5 845.0,697.0 846.9,697.0 847.2,713.5 848.9,713.5 849.2,704.0 851.1,704.0 851.4,713.5 852.7,713.5 853.0,704.0 854.1,704.0 854.4,713.5 856.7,713.5 857.0,704.0 858.9,704.0 859.2,713.5 860.9,713.5 861.2,697.0 861.5,697.0 861.8,713.5 864.1,713.5 864.4,697.0 864.7,697.0 865.0,713.5 866.3,713.5 866.6,697.0 867.7,697.0 868.0,713.5 868.2,713.5 868.5,697.0 868.8,697.0 869.1,713.5 870.4,713.5 870.7,683.8 871.8,683.8 872.1,713.5 874.4,713.5 874.7,704.0 875.0,704.0 875.3,713.5 876.6,713.5 876.9,687.5 877.6,687.5 877.9,713.5 878.4,713.5 878.7,697.0 880.6,697.0 880.9,713.5 883.2,713.5 883.5,704.0 884.2,704.0 884.5,713.5 885.8,713.5 886.1,704.0 887.2,704.0 887.5,713.5 888.4,713.5 888.7,680.4 889.8,680.4 890.1,713.5 892.4,713.5 892.7,704.0 893.4,704.0 893.7,713.5 894.2,713.5 894.5,687.5 896.4,687.5 896.7,713.5 896.9,713.5 897.2,697.0 897.5,697.0 897.8,713.5 898.7,713.5 899.0,704.0 899.7,704.0 900.0,713.5 900.9,713.5 901.2,704.0 901.9,704.0 902.2,713.5 903.9,713.5 904.2,697.0 904.9,697.0 905.2,713.5 906.5,713.5 906.8,704.0 907.9,704.0 908.2,713.5 909.5,713.5 909.8,704.0 910.9,704.0 911.2,713.5 913.5,713.5 913.8,697.0 915.7,697.0 916.0,713.5 916.9,713.5 917.2,704.0 919.1,704.0 919.4,713.5 920.3,713.5 920.6,697.0 920.9,697.0 921.2,713.5 922.5,713.5 922.8,687.5 924.7,687.5 925.0,713.5 925.2,713.5 925.5,704.0 926.2,704.0 926.5,713.5 927.8,713.5 928.1,684.8 929.2,684.8 929.5,713.5 929.7,713.5 930.0,697.0 930.7,697.0 931.0,713.5 931.2,713.5 931.5,687.5 932.6,687.5 932.9,713.5 934.2,713.5 934.5,697.0 936.4,697.0 936.7,713.5 938.4,713.5 938.7,687.5 940.6,687.5 940.9,713.5 941.4,713.5 941.7,697.0 942.4,697.0 942.7,713.5 943.6,713.5 943.9,687.5 944.6,687.5 944.9,713.5 947.2,713.5 947.5,697.0 948.6,697.0 948.9,713.5 950.6,713.5 950.9,697.0 951.6,697.0 951.9,713.5 953.6,713.5 953.9,697.0 954.2,697.0 954.5,713.5 955.0,713.5 955.3,687.5 956.0,687.5 956.3,713.5 956.8,713.5 957.1,704.0 958.2,704.0 958.5,713.5 960.2,713.5 960.5,697.0 960.8,697.0 961.1,713.5 962.4,713.5 962.7,697.0 963.0,697.0 963.3,713.5 965.6,713.5 965.9,697.0 967.0,697.0 967.3,713.5 967.5,713.5 967.8,697.0 969.7,697.0 970.0,713.5 970.5,713.5 970.8,687.5 971.1,687.5 971.4,713.5 972.7,713.5 973.0,704.0 974.9,704.0 975.2,713.5 976.9,713.5 977.2,704.0 978.3,704.0 978.6,713.5 979.5,713.5 979.8,704.0 980.1,704.0 980.4,713.5 982.1,713.5 982.4,704.0 984.3,704.0 984.6,713.5" fill="none" stroke="#d4d4d4" stroke-width="0.9"/>
  <polyline clip-path="url(#nsel)" points="116.0,713.5 117.6,713.5 117.9,687.5 119.8,687.5 120.1,713.5 121.4,713.5 121.7,697.0 122.4,697.0 122.7,713.5 123.2,713.5 123.5,697.0 125.4,697.0 125.7,713.5 128.0,713.5 128.3,697.0 129.0,697.0 129.3,713.5 129.5,713.5 129.8,704.0 130.5,704.0 130.8,713.5 131.0,713.5 131.3,697.0 131.6,697.0 131.9,713.5 133.6,713.5 133.9,685.8 134.6,685.8 134.9,713.5 136.6,713.5 136.9,704.0 137.2,704.0 137.5,713.5 137.7,713.5 138.0,704.0 138.7,704.0 139.0,713.5 140.7,713.5 141.0,704.0 142.9,704.0 143.2,713.5 144.1,713.5 144.4,704.0 145.1,704.0 145.4,713.5 147.1,713.5 147.4,704.0 148.5,704.0 148.8,713.5 150.1,713.5 150.4,704.0 150.7,704.0 151.0,713.5 152.3,713.5 152.6,697.0 154.5,697.0 154.8,713.5 156.5,713.5 156.8,685.0 157.9,685.0 158.2,713.5 159.1,713.5 159.4,697.0 160.5,697.0 160.8,713.5 161.0,713.5 161.3,704.0 161.6,704.0 161.9,713.5 163.2,713.5 163.5,704.0 164.6,704.0 164.9,713.5 166.2,713.5 166.5,704.0 166.8,704.0 167.1,713.5 169.4,713.5 169.7,704.0 170.4,704.0 170.7,713.5 170.9,713.5 171.2,704.0 173.1,704.0 173.4,713.5 174.7,713.5 175.0,704.0 175.7,704.0 176.0,713.5 178.3,713.5 178.6,704.0 178.9,704.0 179.2,713.5 180.1,713.5 180.4,704.0 182.3,704.0 182.6,713.5 182.8,713.5 183.1,704.0 183.4,704.0 183.7,713.5 183.9,713.5 184.2,704.0 186.1,704.0 186.4,713.5 186.9,713.5 187.2,697.0 187.9,697.0 188.2,713.5 189.5,713.5 189.8,697.0 190.5,697.0 190.8,713.5 192.1,713.5 192.4,697.0 192.7,697.0 193.0,713.5 194.3,713.5 194.6,704.0 195.3,704.0 195.6,713.5 195.8,713.5 196.1,704.0 197.2,704.0 197.5,713.5 197.7,713.5 198.0,704.0 199.9,704.0 200.2,713.5 201.9,713.5 202.2,697.0 202.5,697.0 202.8,713.5 203.0,713.5 203.3,681.3 204.4,681.3 204.7,713.5 204.9,713.5 205.2,697.0 206.3,697.0 206.6,713.5 207.5,713.5 207.8,704.0 208.1,704.0 208.4,713.5 208.6,713.5 208.9,704.0 209.6,704.0 209.9,713.5 210.1,713.5 210.4,697.0 211.5,697.0 211.8,713.5 213.5,713.5 213.8,704.0 215.7,704.0 216.0,713.5 217.7,713.5 218.0,704.0 219.9,704.0 220.2,713.5 220.7,713.5 221.0,697.0 222.1,697.0 222.4,713.5 222.9,713.5 223.2,697.0 223.9,697.0 224.2,713.5 226.5,713.5 226.8,704.0 227.5,704.0 227.8,713.5 230.1,713.5 230.4,685.3 230.7,685.3 231.0,713.5 232.3,713.5 232.6,704.0 232.9,704.0 233.2,713.5 233.4,713.5 233.7,697.0 234.8,697.0 235.1,713.5 235.6,713.5 235.9,697.0 237.8,697.0 238.1,713.5 239.0,713.5 239.3,704.0 241.2,704.0 241.5,713.5 242.4,713.5 242.7,697.0 243.0,697.0 243.3,713.5 243.8,713.5 244.1,704.0 244.4,704.0 244.7,713.5 245.6,713.5 245.9,704.0 246.6,704.0 246.9,713.5 249.2,713.5 249.5,704.0 250.6,704.0 250.9,713.5 252.2,713.5 252.5,704.0 252.8,704.0 253.1,713.5 253.3,713.5 253.6,704.0 254.7,704.0 255.0,713.5 256.7,713.5 257.0,697.0 257.7,697.0 258.0,713.5 258.2,713.5 258.5,704.0 260.4,704.0 260.7,713.5 261.6,713.5 261.9,697.0 262.6,697.0 262.9,713.5 264.6,713.5 264.9,704.0 265.2,704.0 265.5,713.5 266.8,713.5 267.1,687.5 268.2,687.5 268.5,713.5 268.7,713.5 269.0,704.0 269.3,704.0 269.6,713.5 270.9,713.5 271.2,704.0 272.3,704.0 272.6,713.5 273.5,713.5 273.8,704.0 274.1,704.0 274.4,713.5 274.6,713.5 274.9,704.0 276.0,704.0 276.3,713.5 278.6,713.5 278.9,704.0 279.6,704.0 279.9,713.5 280.8,713.5 281.1,704.0 283.0,704.0 283.3,713.5 283.5,713.5 283.8,687.5 285.7,687.5 286.0,713.5 286.2,713.5 286.5,687.5 286.8,687.5 287.1,713.5 288.8,713.5 289.1,697.0 291.0,697.0 291.3,713.5 293.0,713.5 293.3,704.0 293.6,704.0 293.9,713.5 294.1,713.5 294.4,704.0 294.7,704.0 295.0,713.5 295.9,713.5 296.2,687.5 297.3,687.5 297.6,713.5 298.9,713.5 299.2,687.5 301.1,687.5 301.4,713.5 302.7,713.5 303.0,704.0 303.3,704.0 303.6,713.5 305.3,713.5 305.6,697.0 305.9,697.0 306.2,713.5 307.1,713.5 307.4,697.0 309.3,697.0 309.6,713.5 309.8,713.5 310.1,704.0 310.4,704.0 310.7,713.5 312.0,713.5 312.3,697.0 314.2,697.0 314.5,713.5 315.4,713.5 315.7,687.5 316.8,687.5 317.1,713.5 318.0,713.5 318.3,704.0 319.0,704.0 319.3,713.5 321.0,713.5 321.3,704.0 322.4,704.0 322.7,713.5 325.0,713.5 325.3,687.5 327.2,687.5 327.5,713.5 328.0,713.5 328.3,704.0 329.4,704.0 329.7,713.5 330.2,713.5 330.5,697.0 331.2,697.0 331.5,713.5 332.0,713.5 332.3,704.0 333.4,704.0 333.7,713.5 334.2,713.5 334.5,704.0 336.4,704.0 336.7,713.5 337.6,713.5 337.9,687.5 338.2,687.5 338.5,713.5 340.8,713.5 341.1,704.0 342.2,704.0 342.5,713.5 343.0,713.5 343.3,704.0 345.2,704.0 345.5,713.5 346.4,713.5 346.7,687.5 348.6,687.5 348.9,713.5 350.2,713.5 350.5,697.0 352.4,697.0 352.7,713.5 355.0,713.5 355.3,704.0 357.2,704.0 357.5,713.5 358.4,713.5 358.7,704.0 359.0,704.0 359.3,713.5 360.2,713.5 360.5,687.5 360.8,687.5 361.1,713.5 363.4,713.5 363.7,697.0 364.8,697.0 365.1,713.5 366.0,713.5 366.3,697.0 366.6,697.0 366.9,713.5 369.2,713.5 369.5,704.0 371.4,704.0 371.7,713.5 372.2,713.5 372.5,704.0 373.6,704.0 373.9,713.5 374.4,713.5 374.7,697.0 375.0,697.0 375.3,713.5 377.6,713.5 377.9,704.0 378.2,704.0 378.5,713.5 380.8,713.5 381.1,697.0 382.2,697.0 382.5,713.5 382.7,713.5 383.0,697.0 383.7,697.0 384.0,713.5 385.3,713.5 385.6,704.0 385.9,704.0 386.2,713.5 387.5,713.5 387.8,697.0 388.1,697.0 388.4,713.5 388.9,713.5 389.2,704.0 390.3,704.0 390.6,713.5 392.3,713.5 392.6,697.0 393.3,697.0 393.6,713.5 394.9,713.5 395.2,687.5 395.9,687.5 396.2,713.5 396.4,713.5 396.7,704.0 398.6,704.0 398.9,713.5 399.4,713.5 399.7,704.0 400.4,704.0 400.7,713.5 403.0,713.5 403.3,687.5 403.6,687.5 403.9,713.5 405.2,713.5 405.5,697.0 406.6,697.0 406.9,713.5 408.2,713.5 408.5,704.0 409.2,704.0 409.5,713.5 409.7,713.5 410.0,697.0 410.3,697.0 410.6,713.5 411.1,713.5 411.4,704.0 413.3,704.0 413.6,713.5 413.8,713.5 414.1,683.2 415.2,683.2 415.5,713.5 416.4,713.5 416.7,687.5 417.0,687.5 417.3,713.5 418.2,713.5 418.5,697.0 418.8,697.0 419.1,713.5 420.4,713.5 420.7,704.0 422.6,704.0 422.9,713.5 423.8,713.5 424.1,704.0 424.4,704.0 424.7,713.5 425.2,713.5 425.5,697.0 425.8,697.0 426.1,713.5 427.4,713.5 427.7,697.0 428.4,697.0 428.7,713.5 430.4,713.5 430.7,704.0 431.4,704.0 431.7,713.5 433.0,713.5 433.3,704.0 435.2,704.0 435.5,713.5 436.8,713.5 437.1,697.0 437.4,697.0 437.7,713.5 438.2,713.5 438.5,704.0 439.6,704.0 439.9,713.5 442.2,713.5 442.5,697.0 443.2,697.0 443.5,713.5 445.2,713.5 445.5,697.0 446.6,697.0 446.9,713.5 447.8,713.5 448.1,697.0 448.8,697.0 449.1,713.5 450.0,713.5 450.3,687.5 451.4,687.5 451.7,713.5 453.4,713.5 453.7,704.0 455.6,704.0 455.9,713.5 457.6,713.5 457.9,704.0 458.2,704.0 458.5,713.5 460.2,713.5 460.5,704.0 460.8,704.0 461.1,713.5 462.8,713.5 463.1,687.5 463.4,687.5 463.7,713.5 465.0,713.5 465.3,704.0 466.0,704.0 466.3,713.5 466.5,713.5 466.8,687.5 468.7,687.5 469.0,713.5 470.3,713.5 470.6,687.5 472.5,687.5 472.8,713.5 473.7,713.5 474.0,704.0 475.9,704.0 476.2,713.5 476.7,713.5 477.0,704.0 478.9,704.0 479.2,713.5 480.9,713.5 481.2,704.0 481.9,704.0 482.2,713.5 483.5,713.5 483.8,697.0 484.9,697.0 485.2,713.5 485.7,713.5 486.0,697.0 486.3,697.0 486.6,713.5 486.8,713.5 487.1,704.0 487.8,704.0 488.1,713.5 488.3,713.5 488.6,697.0 489.7,697.0 490.0,713.5 492.3,713.5 492.6,704.0 494.5,704.0 494.8,713.5 495.0,713.5 495.3,704.0 495.6,704.0 495.9,713.5 497.6,713.5 497.9,697.0 498.6,697.0 498.9,713.5 501.2,713.5 501.5,697.0 503.4,697.0 503.7,713.5 503.9,713.5 504.2,704.0 506.1,704.0 506.4,713.5 508.1,713.5 508.4,697.0 509.1,697.0 509.4,713.5 511.7,713.5 512.0,697.0 512.7,697.0 513.0,713.5 514.7,713.5 515.0,704.0 515.7,704.0 516.0,713.5 516.5,713.5 516.8,687.5 517.9,687.5 518.2,713.5 518.7,713.5 519.0,704.0 520.1,704.0 520.4,713.5 520.9,713.5 521.2,704.0 521.9,704.0 522.2,713.5 522.4,713.5 522.7,704.0 523.4,704.0 523.7,713.5 524.2,713.5 524.5,697.0 525.6,697.0 525.9,713.5 527.2,713.5 527.5,704.0 529.4,704.0 529.7,713.5 531.4,713.5 531.7,697.0 532.4,697.0 532.7,713.5 533.2,713.5 533.5,704.0 533.8,704.0 534.1,713.5 534.3,713.5 534.6,704.0 535.7,704.0 536.0,713.5 536.9,713.5 537.2,704.0 538.3,704.0 538.6,713.5 540.3,713.5 540.6,685.0 540.9,685.0 541.2,713.5 542.5,713.5 542.8,704.0 543.1,704.0 543.4,713.5 545.1,713.5 545.4,697.0 547.3,697.0 547.6,713.5 548.1,713.5 548.4,704.0 548.7,704.0 549.0,713.5 549.5,713.5 549.8,704.0 550.5,704.0 550.8,713.5 551.7,713.5 552.0,687.5 552.3,687.5 552.6,713.5 554.3,713.5 554.6,704.0 556.5,704.0 556.8,713.5 557.0,713.5 557.3,697.0 558.4,697.0 558.7,713.5 560.0,713.5 560.3,704.0 561.4,704.0 561.7,713.5 563.0,713.5 563.3,704.0 564.4,704.0 564.7,713.5 564.9,713.5 565.2,697.0 565.5,697.0 565.8,713.5 566.3,713.5 566.6,704.0 568.5,704.0 568.8,713.5 569.7,713.5 570.0,697.0 571.9,697.0 572.2,713.5 572.7,713.5 573.0,697.0 573.3,697.0 573.6,713.5 575.3,713.5 575.6,697.0 576.7,697.0 577.0,713.5 577.2,713.5 577.5,697.0 579.4,697.0 579.7,713.5 581.4,713.5 581.7,697.0 582.8,697.0 583.1,713.5 584.0,713.5 584.3,704.0 584.6,704.0 584.9,713.5 587.2,713.5 587.5,697.0 588.2,697.0 588.5,713.5 589.8,713.5 590.1,704.0 591.2,704.0 591.5,713.5 593.2,713.5 593.5,697.0 595.4,697.0 595.7,713.5 596.2,713.5 596.5,704.0 597.2,704.0 597.5,713.5 597.7,713.5 598.0,697.0 599.1,697.0 599.4,713.5 600.7,713.5 601.0,704.0 602.1,704.0 602.4,713.5 604.7,713.5 605.0,687.5 605.3,687.5 605.6,713.5 606.1,713.5 606.4,704.0 607.5,704.0 607.8,713.5 608.7,713.5 609.0,704.0 610.9,704.0 611.2,713.5 612.9,713.5 613.2,704.0 613.5,704.0 613.8,713.5 615.1,713.5 615.4,697.0 617.3,697.0 617.6,713.5 619.9,713.5 620.2,704.0 620.5,704.0 620.8,713.5 622.1,713.5 622.4,680.1 622.7,680.1 623.0,713.5 625.3,713.5 625.6,704.0 627.5,704.0 627.8,713.5 629.1,713.5 629.4,697.0 630.1,697.0 630.4,713.5 632.7,713.5 633.0,704.0 633.3,704.0 633.6,713.5 634.5,713.5 634.8,704.0 635.9,704.0 636.2,713.5 637.9,713.5 638.2,697.0 640.1,697.0 640.4,713.5 642.1,713.5 642.4,697.0 642.7,697.0 643.0,713.5 645.3,713.5 645.6,704.0 645.9,704.0 646.2,713.5 647.9,713.5 648.2,697.0 648.5,697.0 648.8,713.5 650.1,713.5 650.4,687.5 651.1,687.5 651.4,713.5 652.7,713.5 653.0,704.0 653.7,704.0 654.0,713.5 655.3,713.5 655.6,697.0 655.9,697.0 656.2,713.5 657.5,713.5 657.8,687.5 659.7,687.5 660.0,713.5 660.9,713.5 661.2,697.0 662.3,697.0 662.6,713.5 663.5,713.5 663.8,697.0 665.7,697.0 666.0,713.5 668.3,713.5 668.6,704.0 669.7,704.0 670.0,713.5 672.3,713.5 672.6,697.0 673.7,697.0 674.0,713.5 674.2,713.5 674.5,704.0 675.2,704.0 675.5,713.5 677.2,713.5 677.5,704.0 678.2,704.0 678.5,713.5 679.8,713.5 680.1,697.0 682.0,697.0 682.3,713.5 682.5,713.5 682.8,687.5 684.7,687.5 685.0,713.5 685.2,713.5 685.5,697.0 686.6,697.0 686.9,713.5 687.1,713.5 687.4,697.0 688.1,697.0 688.4,713.5 689.7,713.5 690.0,697.0 691.1,697.0 691.4,713.5 691.9,713.5 692.2,704.0 692.5,704.0 692.8,713.5 695.1,713.5 695.4,687.5 696.1,687.5 696.4,713.5 696.9,713.5 697.2,697.0 697.5,697.0 697.8,713.5 698.0,713.5 698.3,697.0 700.2,697.0 700.5,713.5 700.7,713.5 701.0,704.0 701.3,704.0 701.6,713.5 702.5,713.5 702.8,697.0 703.1,697.0 703.4,713.5 704.3,713.5 704.6,704.0 706.5,704.0 706.8,713.5 708.1,713.5 708.4,697.0 710.3,697.0 710.6,713.5 711.5,713.5 711.8,697.0 712.5,697.0 712.8,713.5 713.7,713.5 714.0,697.0 714.7,697.0 715.0,713.5 716.3,713.5 716.6,704.0 717.7,704.0 718.0,713.5 719.7,713.5 720.0,697.0 721.1,697.0 721.4,713.5 722.3,713.5 722.6,704.0 723.3,704.0 723.6,713.5 725.9,713.5 726.2,704.0 726.9,704.0 727.2,713.5 727.7,713.5 728.0,683.0 728.7,683.0 729.0,713.5 731.3,713.5 731.6,704.0 731.9,704.0 732.2,713.5 732.4,713.5 732.7,704.0 734.6,704.0 734.9,713.5 735.1,713.5 735.4,697.0 735.7,697.0 736.0,713.5 736.5,713.5 736.8,697.0 737.1,697.0 737.4,713.5 737.6,713.5 737.9,687.5 738.6,687.5 738.9,713.5 740.6,713.5 740.9,704.0 742.0,704.0 742.3,713.5 743.6,713.5 743.9,704.0 744.6,704.0 744.9,713.5 745.8,713.5 746.1,704.0 746.8,704.0 747.1,713.5 747.3,713.5 747.6,697.0 749.5,697.0 749.8,713.5 751.5,713.5 751.8,687.5 752.5,687.5 752.8,713.5 754.1,713.5 754.4,704.0 755.5,704.0 755.8,713.5 757.1,713.5 757.4,697.0 758.5,697.0 758.8,713.5 759.3,713.5 759.6,697.0 760.7,697.0 761.0,713.5 761.9,713.5 762.2,697.0 762.9,697.0 763.2,713.5 764.5,713.5 764.8,697.0 765.1,697.0 765.4,713.5 766.7,713.5 767.0,687.5 767.3,687.5 767.6,713.5 769.3,713.5 769.6,704.0 771.5,704.0 771.8,713.5 774.1,713.5 774.4,704.0 774.7,704.0 775.0,713.5 775.2,713.5 775.5,704.0 775.8,704.0 776.1,713.5 778.4,713.5 778.7,704.0 779.8,704.0 780.1,713.5 781.0,713.5 781.3,687.5 782.0,687.5 782.3,713.5 783.2,713.5 783.5,697.0 784.6,697.0 784.9,713.5 785.8,713.5 786.1,687.5 787.2,687.5 787.5,713.5 789.8,713.5 790.1,704.0 791.2,704.0 791.5,713.5 792.8,713.5 793.1,697.0 794.2,697.0 794.5,713.5 795.8,713.5 796.1,704.0 798.0,704.0 798.3,713.5 800.6,713.5 800.9,687.5 801.6,687.5 801.9,713.5 802.1,713.5 802.4,704.0 803.5,704.0 803.8,713.5 804.0,713.5 804.3,704.0 806.2,704.0 806.5,713.5 808.2,713.5 808.5,704.0 809.2,704.0 809.5,713.5 811.8,713.5 812.1,697.0 814.0,697.0 814.3,713.5 816.0,713.5 816.3,704.0 817.0,704.0 817.3,713.5 817.8,713.5 818.1,704.0 820.0,704.0 820.3,713.5 821.2,713.5 821.5,697.0 822.2,697.0 822.5,713.5 824.2,713.5 824.5,704.0 825.2,704.0 825.5,713.5 827.2,713.5 827.5,704.0 827.8,704.0 828.1,713.5 830.4,713.5 830.7,687.5 832.6,687.5 832.9,713.5 833.1,713.5 833.4,697.0 834.5,697.0 834.8,713.5 836.5,713.5 836.8,704.0 837.1,704.0 837.4,713.5 838.3,713.5 838.6,697.0 839.7,697.0 840.0,713.5 840.2,713.5 840.5,704.0 841.2,704.0 841.5,713.5 841.7,713.5 842.0,697.0 843.9,697.0 844.2,713.5 844.7,713.5 845.0,697.0 846.9,697.0 847.2,713.5 848.9,713.5 849.2,704.0 851.1,704.0 851.4,713.5 852.7,713.5 853.0,704.0 854.1,704.0 854.4,713.5 856.7,713.5 857.0,704.0 858.9,704.0 859.2,713.5 860.9,713.5 861.2,697.0 861.5,697.0 861.8,713.5 864.1,713.5 864.4,697.0 864.7,697.0 865.0,713.5 866.3,713.5 866.6,697.0 867.7,697.0 868.0,713.5 868.2,713.5 868.5,697.0 868.8,697.0 869.1,713.5 870.4,713.5 870.7,683.8 871.8,683.8 872.1,713.5 874.4,713.5 874.7,704.0 875.0,704.0 875.3,713.5 876.6,713.5 876.9,687.5 877.6,687.5 877.9,713.5 878.4,713.5 878.7,697.0 880.6,697.0 880.9,713.5 883.2,713.5 883.5,704.0 884.2,704.0 884.5,713.5 885.8,713.5 886.1,704.0 887.2,704.0 887.5,713.5 888.4,713.5 888.7,680.4 889.8,680.4 890.1,713.5 892.4,713.5 892.7,704.0 893.4,704.0 893.7,713.5 894.2,713.5 894.5,687.5 896.4,687.5 896.7,713.5 896.9,713.5 897.2,697.0 897.5,697.0 897.8,713.5 898.7,713.5 899.0,704.0 899.7,704.0 900.0,713.5 900.9,713.5 901.2,704.0 901.9,704.0 902.2,713.5 903.9,713.5 904.2,697.0 904.9,697.0 905.2,713.5 906.5,713.5 906.8,704.0 907.9,704.0 908.2,713.5 909.5,713.5 909.8,704.0 910.9,704.0 911.2,713.5 913.5,713.5 913.8,697.0 915.7,697.0 916.0,713.5 916.9,713.5 917.2,704.0 919.1,704.0 919.4,713.5 920.3,713.5 920.6,697.0 920.9,697.0 921.2,713.5 922.5,713.5 922.8,687.5 924.7,687.5 925.0,713.5 925.2,713.5 925.5,704.0 926.2,704.0 926.5,713.5 927.8,713.5 928.1,684.8 929.2,684.8 929.5,713.5 929.7,713.5 930.0,697.0 930.7,697.0 931.0,713.5 931.2,713.5 931.5,687.5 932.6,687.5 932.9,713.5 934.2,713.5 934.5,697.0 936.4,697.0 936.7,713.5 938.4,713.5 938.7,687.5 940.6,687.5 940.9,713.5 941.4,713.5 941.7,697.0 942.4,697.0 942.7,713.5 943.6,713.5 943.9,687.5 944.6,687.5 944.9,713.5 947.2,713.5 947.5,697.0 948.6,697.0 948.9,713.5 950.6,713.5 950.9,697.0 951.6,697.0 951.9,713.5 953.6,713.5 953.9,697.0 954.2,697.0 954.5,713.5 955.0,713.5 955.3,687.5 956.0,687.5 956.3,713.5 956.8,713.5 957.1,704.0 958.2,704.0 958.5,713.5 960.2,713.5 960.5,697.0 960.8,697.0 961.1,713.5 962.4,713.5 962.7,697.0 963.0,697.0 963.3,713.5 965.6,713.5 965.9,697.0 967.0,697.0 967.3,713.5 967.5,713.5 967.8,697.0 969.7,697.0 970.0,713.5 970.5,713.5 970.8,687.5 971.1,687.5 971.4,713.5 972.7,713.5 973.0,704.0 974.9,704.0 975.2,713.5 976.9,713.5 977.2,704.0 978.3,704.0 978.6,713.5 979.5,713.5 979.8,704.0 980.1,704.0 980.4,713.5 982.1,713.5 982.4,704.0 984.3,704.0 984.6,713.5" fill="none" stroke="#3c3c3c" stroke-width="1"/>
  <circle cx="250.5" cy="699" r="13.5" fill="#fff" opacity="0.6"/>
  <circle cx="836" cy="699" r="13.5" fill="#fff" opacity="0.6"/>
  <circle cx="250.5" cy="699" r="12.5" fill="#cfcfcf"/>
  <circle cx="836" cy="699" r="12.5" fill="#cfcfcf"/>
  <g stroke="#eeeeee" stroke-width="1"><line x1="248.5" y1="693" x2="248.5" y2="704"/><line x1="252.5" y1="693" x2="252.5" y2="704"/><line x1="834" y1="693" x2="834" y2="704"/><line x1="838" y1="693" x2="838" y2="704"/></g>
</svg>
<div class="abs" id="lbl744" style="left:71.8px;top:310.6px;font-size:13px;line-height:1;color:#c0282d;letter-spacing:0.17px">744.1</div>
<div class="abs" style="left:71.8px;top:361.6px;font-size:13px;line-height:1;color:#c0282d;letter-spacing:0.17px">744.0</div>
<div class="abs" style="left:71.8px;top:412.6px;font-size:13px;line-height:1;color:#c0282d;letter-spacing:0.17px">744.0</div>
<div class="abs" style="left:71.8px;top:463.6px;font-size:13px;line-height:1;color:#c0282d;letter-spacing:0.17px">743.9</div>
<div class="abs" style="left:71.8px;top:514.6px;font-size:13px;line-height:1;color:#c0282d;letter-spacing:0.17px">743.9</div>
<div class="abs" style="left:71.8px;top:565.6px;font-size:13px;line-height:1;color:#c0282d;letter-spacing:0.17px">743.8</div>
<div class="abs" style="left:71.8px;top:616.6px;font-size:13px;line-height:1;color:#c0282d;letter-spacing:0.17px">743.8</div>
<div class="abs" id="ytitle" style="left:-32.5px;top:454.5px;width:168px;text-align:center;font-size:13px;font-weight:bold;color:#c0282d;transform:rotate(-90deg);letter-spacing:0.82px;line-height:1">Gross Flow Rate (bbl/hr)</div>
<div class="xlab" id="x15" style="left:246.1px;top:635.2px;letter-spacing:0.93px">15:00</div>
<div class="xlab" style="left:406.7px;top:635.2px;letter-spacing:0.93px">18:00</div>
<div class="xlab" style="left:567.3px;top:635.2px;letter-spacing:0.93px">21:00</div>
<div class="xlab" style="left:727.9px;top:635.2px;letter-spacing:0.93px">00:00</div>
<div class="xlab" style="left:888.5px;top:635.2px;letter-spacing:0.93px">03:00</div>
<div class="abs" id="batch" style="left:839px;top:323px;font-size:12.5px;line-height:1;color:#222">Batch 79</div>
<div class="abs" style="left:332.5px;top:703px;width:40px;text-align:center;font-size:11px;line-height:1;color:#666">15:00</div>
<div class="abs" style="left:441.6px;top:703px;width:40px;text-align:center;font-size:11px;line-height:1;color:#666">18:00</div>
<div class="abs" style="left:550.7px;top:703px;width:40px;text-align:center;font-size:11px;line-height:1;color:#666">21:00</div>
<div class="abs" style="left:659.8px;top:703px;width:40px;text-align:center;font-size:11px;line-height:1;color:#666">00:00</div>
<div class="abs" style="left:768.9px;top:703px;width:40px;text-align:center;font-size:11px;line-height:1;color:#666">03:00</div>
<div class="badge" style="left:219px;top:692px">3</div>
<div class="badge" style="left:836px;top:692px">3</div>

<div class="abs" id="side"></div>
<div class="lbl" id="l1" style="left:1042.4px;top:222.8px">Meter Run:</div>
<div class="lbl" id="l2" style="left:1042.4px;top:253.8px">Period:</div>
<div class="lbl" id="l3" style="left:1042.4px;top:284.8px">Interval:</div>
<div class="lbl" id="l4" style="left:1042.4px;top:315.8px">Start Date:</div>
<div class="lbl" id="l5" style="left:1042.4px;top:346.8px">Start Time:</div>
<div class="sel" id="s1" style="top:219px"><span class="abs" id="s1t" style="left:6px;top:4px;line-height:1">Meter Run 1</span></div>
<div class="sel" id="s2" style="top:250px"><span class="abs" id="s2t" style="left:6px;top:4.6px;line-height:1;letter-spacing:0.32px">Day</span></div>
<div class="sel" id="s3" style="top:281px"><span class="abs" id="s3t" style="left:6px;top:4.6px;line-height:1;letter-spacing:0.32px">1 Minute</span></div>
<div class="abs" style="left:1128px;top:312px;width:20px;height:20px;background:linear-gradient(#3d3d3d,#151515 60%,#0a0a0a);color:#fff;font-size:15px;line-height:21px;text-align:center">&lt;</div>
<div class="abs" style="left:1148px;top:312px;width:98px;height:20px;background:#fff;color:#000;font-size:12px;line-height:20px;padding-left:2px" id="sd">04/05/2020</div>
<div class="abs" style="left:1246px;top:312px;width:20px;height:20px;background:linear-gradient(#3d3d3d,#151515 60%,#0a0a0a);color:#fff;font-size:15px;line-height:21px;text-align:center">&gt;</div>
<div class="abs" style="left:1128px;top:343px;width:20px;height:20px;background:linear-gradient(#3d3d3d,#151515 60%,#0a0a0a);color:#fff;font-size:15px;line-height:21px;text-align:center">&lt;</div>
<div class="abs" style="left:1148px;top:343px;width:98px;height:20px;background:#fff;color:#000;font-size:13px;line-height:20px;padding-left:8px;letter-spacing:0.6px" id="st">08:26</div>
<div class="abs" style="left:1246px;top:343px;width:20px;height:20px;background:linear-gradient(#3d3d3d,#151515 60%,#0a0a0a);color:#fff;font-size:15px;line-height:21px;text-align:center">&gt;</div>
<div class="abs" style="left:1042px;top:378px;width:224px;height:2px;background:#5a5a5a"></div>
<div class="lbl" id="show" style="left:1043px;top:395px;font-size:14px;color:#b0b0b0">Show</div>
<div class="abs" style="left:1042px;top:420px;width:224px;height:30px;border-radius:3px;border:1px solid #4a4a4a;background:linear-gradient(#2e2e2e,#151515 60%,#0c0c0c)"></div>
<div class="abs" style="left:1050px;top:428px;width:14px;height:14px;background:#d0161b"></div>
<div class="abs" id="gfr" style="left:1075px;top:429px;font-size:12px;line-height:1;color:#fff">Gross Flow Rate</div>
<svg class="abs" style="left:1249px;top:430px" width="10" height="10" viewBox="0 0 10 10"><path d="M1.5 1.5L8.5 8.5M8.5 1.5L1.5 8.5" stroke="#fff" stroke-width="2"/></svg>
<div class="btn" id="add" style="left:1042px;top:460px;width:51px">Add</div>
<div class="abs" style="left:1047px;top:501px;width:11px;height:11px;background:linear-gradient(#f4f4f4,#cfcfcf);border-radius:1px"></div>
<svg class="abs" style="left:1047px;top:500px" width="12" height="12" viewBox="0 0 12 12"><path d="M2.3 6.3L4.8 9.2L10 1.8" fill="none" stroke="#222" stroke-width="2"/></svg>
<div class="abs" id="sb" style="left:1066px;top:503px;font-size:13px;line-height:1;color:#fff">Show Batches</div>
<div class="abs" style="left:1042px;top:532px;width:224px;height:2px;background:#5a5a5a"></div>
<div class="btn" style="left:1090px;top:549px;width:128px;height:20px"></div><div class="abs" id="b1t" style="left:1105px;top:553px;font-size:12px;line-height:1;color:#eee">Show Latest Data</div>
<div class="btn" style="left:1097px;top:587px;width:114px;height:21px"></div><div class="abs" id="b2t" style="left:1111px;top:591px;font-size:12px;line-height:1;color:#eee">Apply Selection</div>
<div class="btn" style="left:1088px;top:626px;width:131px;height:20px"></div><div class="abs" id="b3t" style="left:1103px;top:630px;font-size:12px;line-height:1;color:#eee">Previous Selection</div>
<div class="badge" style="left:1075px;top:585px">4</div>

<div class="abs" id="foot"><div class="abs" id="copy" style="left:1183px;top:2px;color:#fff;font-size:10.5px;line-height:1;letter-spacing:0.3px">©Ambrit Ltd. 2020</div></div>
</body></html>
